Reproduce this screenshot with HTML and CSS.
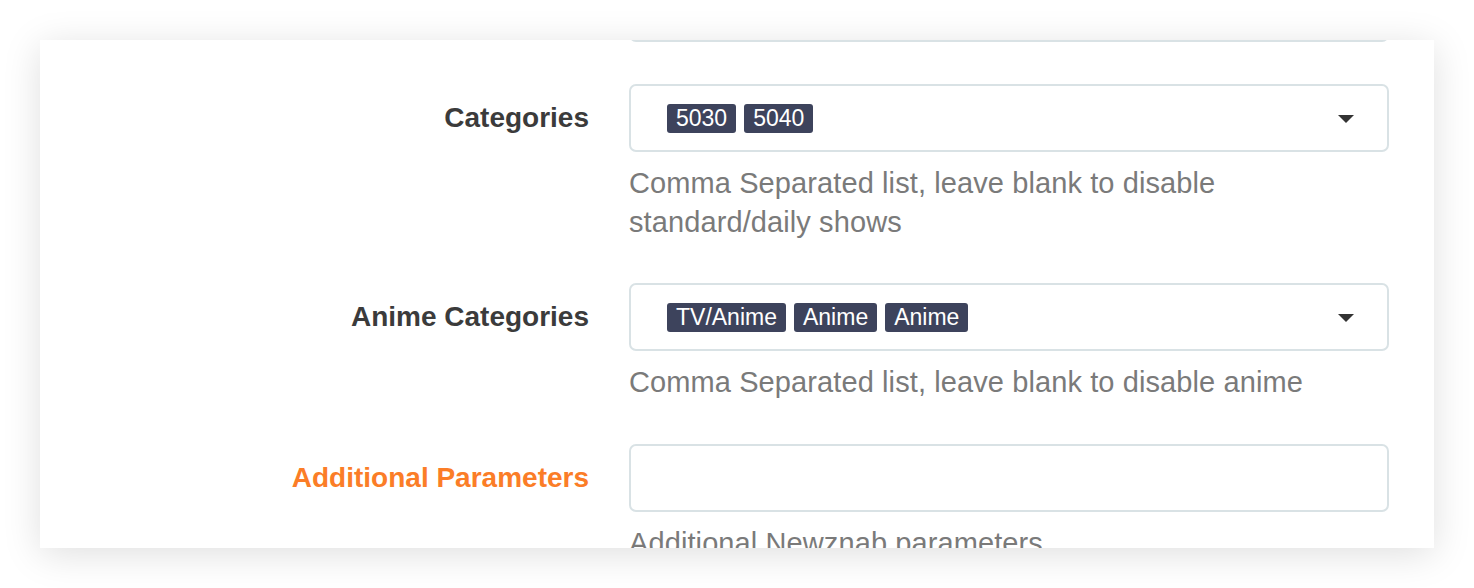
FILE: index.html
```html
<!DOCTYPE html>
<html lang="en">
<head>
<meta charset="utf-8">
<title>Newznab settings</title>
<link rel="stylesheet" href="styles.css">
</head>
<body>
<div class="card">
  <div class="form">
    <div class="row row-prev">
      <div class="label"></div>
      <div class="control">
        <div class="input"></div>
      </div>
    </div>

    <div class="row">
      <div class="label">Categories</div>
      <div class="control">
        <div class="input select">
          <div class="tags">
            <span class="tag">5030</span>
            <span class="tag">5040</span>
          </div>
          <span class="caret"></span>
        </div>
        <div class="help">Comma Separated list, leave blank to disable standard/daily shows</div>
      </div>
    </div>

    <div class="row">
      <div class="label">Anime Categories</div>
      <div class="control">
        <div class="input select">
          <div class="tags">
            <span class="tag">TV/Anime</span>
            <span class="tag">Anime</span>
            <span class="tag">Anime</span>
          </div>
          <span class="caret"></span>
        </div>
        <div class="help">Comma Separated list, leave blank to disable anime</div>
      </div>
    </div>

    <div class="row">
      <div class="label label-advanced">Additional Parameters</div>
      <div class="control">
        <div class="input"></div>
        <div class="help">Additional Newznab parameters</div>
      </div>
    </div>
  </div>
</div>
</body>
</html>
```

FILE: styles.css
```css
html, body {
  margin: 0;
  padding: 0;
  background: #ffffff;
}

body {
  font-family: "Liberation Sans", Arial, Helvetica, sans-serif;
  color: #3b3b3b;
}

.card {
  margin: 40px;
  height: 508px;
  background: #ffffff;
  overflow: hidden;
  box-shadow: 0 6px 36px rgba(0, 0, 0, 0.13);
}

.form {
  display: flex;
  flex-direction: column;
  margin-top: -66px;
}

.row {
  display: grid;
  grid-template-columns: 549px 760px;
  column-gap: 40px;
  margin-bottom: 42px;
}

.label {
  height: 68px;
  display: flex;
  align-items: center;
  justify-content: flex-end;
  font-size: 28px;
  font-weight: bold;
  color: #3b3b3b;
  white-space: nowrap;
}

.label-advanced {
  color: #fb7d27;
}

.control {
  display: flex;
  flex-direction: column;
}

.input {
  box-sizing: border-box;
  height: 68px;
  border: 2px solid #d9e2e5;
  border-radius: 7px;
  background: #ffffff;
}

.select {
  display: flex;
  align-items: center;
  justify-content: space-between;
  padding: 1px 33px 0 36px;
}

.tags {
  display: flex;
  gap: 8px;
}

.tag {
  display: inline-block;
  height: 29px;
  line-height: 29px;
  padding: 0 9px;
  font-size: 23px;
  color: #ffffff;
  background: #3d435c;
  border-radius: 3px;
}

.caret {
  width: 0;
  height: 0;
  border-left: 8px solid transparent;
  border-right: 8px solid transparent;
  border-top: 8px solid #333333;
}

.help {
  margin-top: 12px;
  font-size: 29px;
  line-height: 38.5px;
  letter-spacing: 0.1px;
  color: #7a7a7a;
}
```
